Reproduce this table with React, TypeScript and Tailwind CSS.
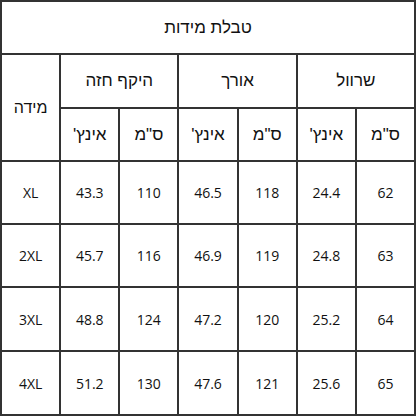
const groups = ["שרוול", "אורך", "היקף חזה"];

const rows = [
  { size: "XL", values: ["62", "24.4", "118", "46.5", "110", "43.3"] },
  { size: "2XL", values: ["63", "24.8", "119", "46.9", "116", "45.7"] },
  { size: "3XL", values: ["64", "25.2", "120", "47.2", "124", "48.8"] },
  { size: "4XL", values: ["65", "25.6", "121", "47.6", "130", "51.2"] },
];

const cell = "flex items-center justify-center bg-white";
const heb = "font-['Liberation_Sans',sans-serif]";

export default function App() {
  return (
    <div
      dir="rtl"
      className="grid h-[416px] w-[416px] grid-cols-7 grid-rows-[51px_52px_51px_61px_61px_62px_62px] gap-[2px] bg-[#333333] p-[2px] text-[#111111]"
      style={{ fontFamily: '"Open Sans", "Liberation Sans", sans-serif' }}
    >
      <div className={`${cell} ${heb} col-span-7 text-[17px]`}>טבלת מידות</div>

      {groups.map((g) => (
        <div key={g} className={`${cell} ${heb} col-span-2 text-[17px]`}>
          {g}
        </div>
      ))}
      <div className={`${cell} ${heb} row-span-2 text-[16px]`}>מידה</div>

      {groups.map((g) => (
        <div key={g} className="contents">
          <div className={`${cell} ${heb} text-[17px]`}>ס"מ</div>
          <div className={`${cell} ${heb} text-[17px]`}>אינץ'</div>
        </div>
      ))}

      {rows.map((r) => (
        <div key={r.size} className="contents">
          {r.values.map((v, i) => (
            <div key={i} className={`${cell} text-[14px]`}>
              {v}
            </div>
          ))}
          <div className={`${cell} text-[14px]`}>{r.size}</div>
        </div>
      ))}
    </div>
  );
}
